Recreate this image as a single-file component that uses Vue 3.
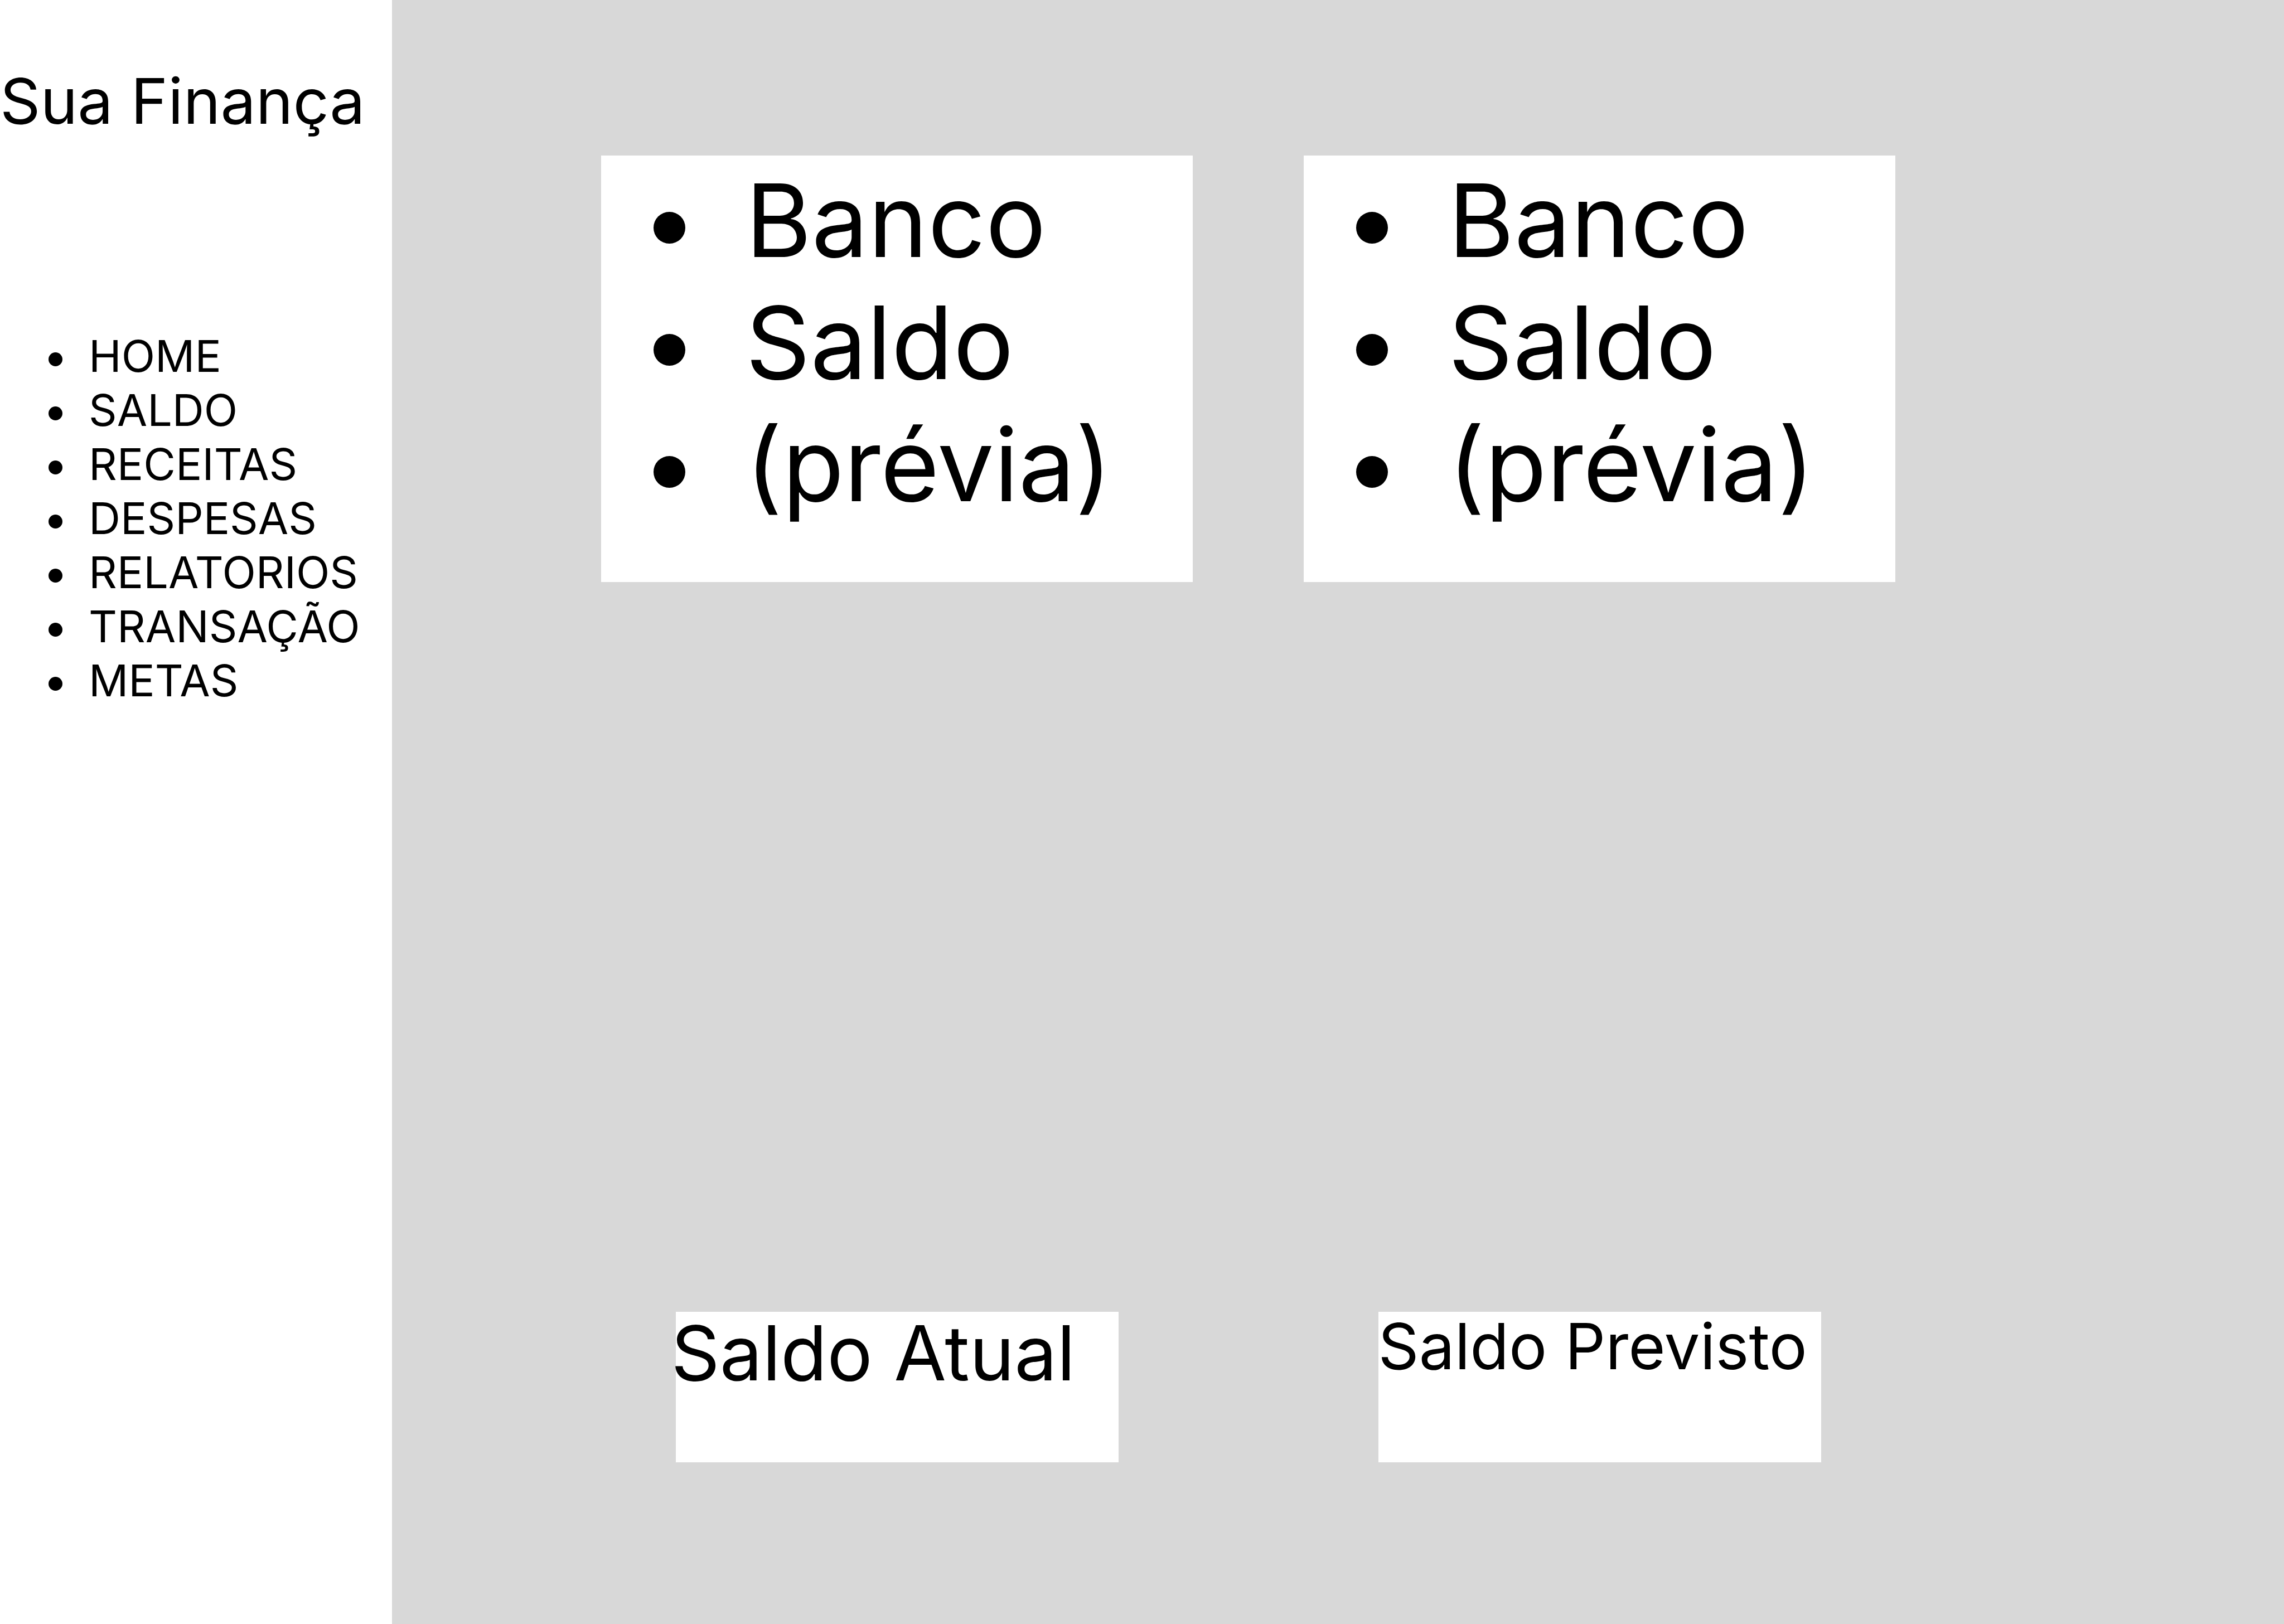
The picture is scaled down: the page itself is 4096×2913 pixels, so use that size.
<script setup>
const menu = ['HOME', 'SALDO', 'RECEITAS', 'DESPESAS', 'RELATORIOS', 'TRANSAÇÃO', 'METAS']

const accounts = [
  { id: 1, lines: ['Banco', 'Saldo', '(prévia)'] },
  { id: 2, lines: ['Banco', 'Saldo', '(prévia)'] },
]
</script>

<template>
  <div class="page">
    <aside class="sidebar">
      <h1 class="brand">Sua Finança</h1>
      <nav>
        <ul class="menu">
          <li v-for="item in menu" :key="item" class="menu-item">
            <a href="#" class="menu-link">{{ item }}</a>
          </li>
        </ul>
      </nav>
    </aside>

    <main class="content">
      <section class="row">
        <ul v-for="account in accounts" :key="account.id" class="account">
          <li v-for="line in account.lines" :key="line" class="account-line">{{ line }}</li>
        </ul>
      </section>

      <section class="row">
        <div class="balance balance-current">
          <h2 class="balance-title">Saldo Atual</h2>
        </div>
        <div class="balance">
          <h2 class="balance-title">Saldo Previsto</h2>
        </div>
      </section>
    </main>
  </div>
</template>

<style>
body {
  margin: 0;
}
</style>

<style scoped>
.page {
  display: flex;
  min-height: 100vh;
  background: #d8d8d8;
  color: #000;
  font-family: Inter, "Liberation Sans", sans-serif;
}

h1,
h2,
ul {
  margin: 0;
  padding: 0;
  font-weight: 400;
  list-style: none;
}

.sidebar {
  box-sizing: border-box;
  flex: 0 0 703px;
  padding-top: 112px;
  background: #fff;
}

.brand {
  margin-bottom: 340px;
  font-size: 113px;
  line-height: 138px;
  white-space: nowrap;
}

.menu-item,
.account-line {
  display: flex;
  align-items: center;
  white-space: nowrap;
}

.menu-item::before,
.account-line::before {
  content: "";
  flex: none;
  border-radius: 50%;
  background: #000;
}

.menu-item {
  gap: 47px;
  padding-left: 87px;
  font-size: 79px;
  line-height: 97px;
}

.menu-item::before {
  width: 25px;
  height: 25px;
  margin-top: 11px;
}

.menu-link {
  color: inherit;
  text-decoration: none;
}

.content {
  box-sizing: border-box;
  flex: 1;
  display: flex;
  flex-direction: column;
  justify-content: space-between;
  padding: 279px 697px 290px 375px;
}

.row {
  display: grid;
  grid-template-columns: 1fr 1fr;
  column-gap: 199px;
}

.account {
  padding: 7px 0 101px 94px;
  background: #fff;
  font-size: 181px;
  line-height: 219px;
}

.account-line {
  gap: 108px;
}

.account-line::before {
  width: 57px;
  height: 57px;
  margin-top: 25px;
}

.balance {
  justify-self: center;
  width: 794px;
  min-height: 270px;
  background: #fff;
  font-size: 114px;
  line-height: 123px;
}

.balance-current {
  font-size: 136px;
  line-height: 147px;
}

.balance-title {
  font-size: inherit;
  white-space: nowrap;
}

.balance-current .balance-title {
  margin-left: -8px;
}
</style>
